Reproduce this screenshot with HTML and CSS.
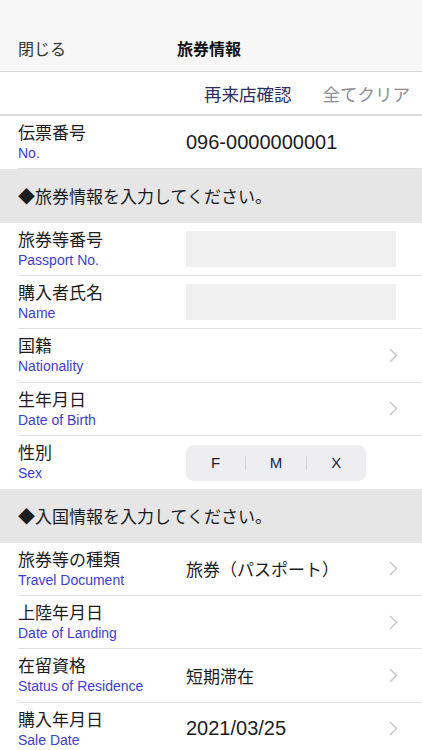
FILE: index.html
```html
<!DOCTYPE html>
<html lang="ja">
<head>
    <meta charset="UTF-8">
    <meta name="viewport" content="width=device-width, initial-scale=1.0">
    <title>旅券情報</title>
    <link rel="stylesheet" href="styles.css">
</head>
<body>
    <div class="navbar">
        <span class="nav-close">閉じる</span>
        <span class="nav-title">旅券情報</span>
    </div>

    <div class="toolbar">
        <span class="tool-link">再来店確認</span>
        <span class="tool-clear">全てクリア</span>
    </div>

    <div class="row">
        <div class="label">
            <div class="label-jp">伝票番号</div>
            <div class="label-en">No.</div>
        </div>
        <div class="value value-num">096-0000000001</div>
    </div>

    <div class="section">◆旅券情報を入力してください。</div>

    <div class="row">
        <div class="label">
            <div class="label-jp">旅券等番号</div>
            <div class="label-en">Passport No.</div>
        </div>
        <div class="field"></div>
    </div>
    <div class="row">
        <div class="label">
            <div class="label-jp">購入者氏名</div>
            <div class="label-en">Name</div>
        </div>
        <div class="field"></div>
    </div>
    <div class="row">
        <div class="label">
            <div class="label-jp">国籍</div>
            <div class="label-en">Nationality</div>
        </div>
        <div class="value"></div>
        <svg class="chevron" viewBox="0 0 9 15"><polyline points="1,1 7.5,7.5 1,14"/></svg>
    </div>
    <div class="row">
        <div class="label">
            <div class="label-jp">生年月日</div>
            <div class="label-en">Date of Birth</div>
        </div>
        <div class="value"></div>
        <svg class="chevron" viewBox="0 0 9 15"><polyline points="1,1 7.5,7.5 1,14"/></svg>
    </div>
    <div class="row row-last">
        <div class="label">
            <div class="label-jp">性別</div>
            <div class="label-en">Sex</div>
        </div>
        <div class="segment">
            <span class="seg-item">F</span>
            <span class="seg-item">M</span>
            <span class="seg-item">X</span>
        </div>
    </div>

    <div class="section">◆入国情報を入力してください。</div>

    <div class="row">
        <div class="label">
            <div class="label-jp">旅券等の種類</div>
            <div class="label-en">Travel Document</div>
        </div>
        <div class="value">旅券（パスポート）</div>
        <svg class="chevron" viewBox="0 0 9 15"><polyline points="1,1 7.5,7.5 1,14"/></svg>
    </div>
    <div class="row">
        <div class="label">
            <div class="label-jp">上陸年月日</div>
            <div class="label-en">Date of Landing</div>
        </div>
        <div class="value"></div>
        <svg class="chevron" viewBox="0 0 9 15"><polyline points="1,1 7.5,7.5 1,14"/></svg>
    </div>
    <div class="row">
        <div class="label">
            <div class="label-jp">在留資格</div>
            <div class="label-en">Status of Residence</div>
        </div>
        <div class="value">短期滞在</div>
        <svg class="chevron" viewBox="0 0 9 15"><polyline points="1,1 7.5,7.5 1,14"/></svg>
    </div>
    <div class="row">
        <div class="label">
            <div class="label-jp">購入年月日</div>
            <div class="label-en">Sale Date</div>
        </div>
        <div class="value value-num">2021/03/25</div>
        <svg class="chevron" viewBox="0 0 9 15"><polyline points="1,1 7.5,7.5 1,14"/></svg>
    </div>
</body>
</html>
```

FILE: styles.css
```css
body {
    margin: 0;
    padding: 0;
    background-color: #ffffff;
    color: #1c1c1e;
    font-family: "Liberation Sans", "Noto Sans CJK JP", sans-serif;
    overflow: hidden;
}

/* top navigation bar */
.navbar {
    height: 72px;
    box-sizing: border-box;
    padding: 0 18px 3px;
    background-color: #f7f7f7;
    border-bottom: 1px solid #d8d8d8;
    display: flex;
    align-items: flex-end;
    height: 72px;
}

.nav-close {
    font-size: 16px;
    line-height: 36px;
    color: #333333;
}

.nav-title {
    margin-left: 111px;
    font-size: 16px;
    line-height: 36px;
    font-weight: bold;
    color: #111111;
}

.toolbar {
    height: 44px;
    box-sizing: border-box;
    border-bottom: 2px solid #dddddd;
    display: flex;
    align-items: center;
    justify-content: flex-end;
    gap: 31px;
    padding-right: 12px;
    font-size: 17.5px;
}

.tool-link {
    color: #2b2f63;
}

.tool-clear {
    color: #8e8e93;
}

/* form rows */
.row {
    height: 53.33px;
    box-sizing: border-box;
    margin-left: 18px;
    border-bottom: 1px solid #e0e0e0;
    display: flex;
    align-items: center;
    padding-right: 24px;
}

.row-last {
    border-bottom: none;
}

.label {
    width: 168px;
    flex-shrink: 0;
    align-self: flex-start;
    padding-top: 8px;
}

.label-jp {
    font-size: 17px;
    line-height: 20px;
    color: #1c1c1e;
}

.label-en {
    font-size: 14px;
    line-height: 18px;
    color: #3d3dd8;
}

.value {
    flex: 1;
    font-size: 17px;
    color: #1c1c1e;
}

.value-num {
    font-size: 20px;
}

.field {
    width: 210px;
    height: 36px;
    background-color: #f0f0f0;
}

.chevron {
    width: 9px;
    height: 15px;
    fill: none;
    stroke: #c3c3c8;
    stroke-width: 1.4;
}

/* section header */
.section {
    height: 53.33px;
    box-sizing: border-box;
    background-color: #e6e6e6;
    padding-left: 18px;
    display: flex;
    align-items: center;
    font-size: 17px;
    color: #1c1c1e;
}

/* F / M / X selector */
.segment {
    width: 180px;
    height: 36px;
    border-radius: 8px;
    background-color: #eeeef0;
    display: flex;
    align-items: center;
}

.seg-item {
    flex: 1;
    text-align: center;
    font-size: 15px;
    font-weight: 500;
    color: #1c1c3a;
    border-left: 1px solid #d6d6da;
    line-height: 14px;
}

.seg-item:first-child {
    border-left: none;
}
```
